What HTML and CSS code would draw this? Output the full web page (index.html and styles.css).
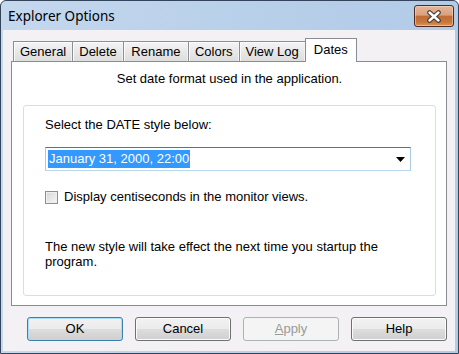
FILE: index.html
```html
<!DOCTYPE html>
<html>
<head>
<meta charset="utf-8">
<title>Explorer Options</title>
<link rel="stylesheet" href="styles.css">
</head>
<body>
<div class="window">
  <div class="titlebar">
    <span class="title">Explorer Options</span>
    <div class="close">
      <svg width="16" height="13" viewBox="0 0 16 13">
        <path d="M3.5 2.5 L12.5 10.5 M12.5 2.5 L3.5 10.5" stroke="#3b3b3b" stroke-width="4.6" stroke-linecap="round" fill="none"/>
        <path d="M3.5 2.5 L12.5 10.5 M12.5 2.5 L3.5 10.5" stroke="#ffffff" stroke-width="2.4" stroke-linecap="round" fill="none"/>
      </svg>
    </div>
  </div>
  <div class="client">
    <div class="tabs">
      <div class="tab">General</div>
      <div class="tab">Delete</div>
      <div class="tab wide">Rename</div>
      <div class="tab">Colors</div>
      <div class="tab">View Log</div>
      <div class="tab active">Dates</div>
    </div>
    <div class="panel">
      <p class="intro">Set date format used in the application.</p>
      <div class="group">
        <div class="label">Select the DATE style below:</div>
        <div class="combo">
          <span class="sel">January 31, 2000, 22:00</span>
          <svg class="arrow" width="9" height="5" viewBox="0 0 9 5"><polygon points="0,0 9,0 4.5,5" fill="#000"/></svg>
        </div>
        <div class="check"><span class="box"></span><span>Display centiseconds in the monitor views.</span></div>
        <p class="note">The new style will take effect the next time you startup the<br>program.</p>
      </div>
    </div>
    <div class="buttons">
      <div class="btn default">OK</div>
      <div class="btn">Cancel</div>
      <div class="btn disabled"><u>A</u>pply</div>
      <div class="btn">Help</div>
    </div>
  </div>
</div>
</body>
</html>
```
FILE: styles.css
```css
html, body {
  margin: 0;
  padding: 0;
  background: #ffffff;
}
body {
  width: 459px;
  height: 354px;
  overflow: hidden;
  font-family: "Liberation Sans", Arial, sans-serif;
  font-size: 13px;
  color: #000;
}
.window {
  box-sizing: border-box;
  width: 459px;
  height: 354px;
  border: 1px solid #34445a;
  border-radius: 6px 6px 0 0;
  background: linear-gradient(90deg, #c4d8ee 0%, #b7cfe9 60%, #b2cbe7 100%);
  display: flex;
  flex-direction: column;
}
.titlebar {
  height: 29px;
  flex: none;
  display: flex;
  justify-content: space-between;
  align-items: flex-start;
  padding: 0 4px 0 7px;
  box-sizing: border-box;
}
.title {
  font-family: "Noto Sans", "Open Sans", sans-serif;
  font-size: 13.5px;
  line-height: 30px;
  color: #000;
}
.close {
  width: 40px;
  height: 22px;
  margin-top: 4px;
  box-sizing: border-box;
  border: 1px solid #4d2a22;
  border-radius: 3px;
  background: linear-gradient(#e6b79a 0%, #daa07c 45%, #c06c38 52%, #c77638 80%, #dc9552 100%);
  box-shadow: inset 0 0 0 1px rgba(255, 235, 215, 0.45);
  display: flex;
  align-items: center;
  justify-content: center;
}
.client {
  flex: 1;
  margin: 0 3px 2px 2px;
  background: #f4f1f4;
  padding: 8px 8px 10px 8px;
  box-sizing: border-box;
  display: flex;
  flex-direction: column;
}
.tabs {
  display: flex;
  align-items: flex-end;
  height: 23px;
  padding-left: 2px;
  flex: none;
}
.tab {
  height: 20px;
  box-sizing: border-box;
  border: 1px solid #8c8e94;
  border-bottom: none;
  margin-right: -1px;
  padding: 0 6px;
  line-height: 19px;
  background: linear-gradient(#f4f4f4, #e8e8e8 50%, #dddddd);
  box-shadow: inset 1px 1px 0 #fbfbfb, inset -1px 0 0 #f2f2f2;
}
.tab.wide {
  padding: 0 7.5px;
}
.tab.active {
  height: 24px;
  line-height: 21px;
  padding: 0 8px;
  background: #ffffff;
  box-shadow: none;
  border-color: #898c95;
  margin-bottom: -1px;
  position: relative;
  z-index: 1;
}
.panel {
  height: 245px;
  flex: none;
  box-sizing: border-box;
  border: 1px solid #898c95;
  background: #ffffff;
  padding: 9px 10px 9px 11px;
  display: flex;
  flex-direction: column;
}
.intro {
  margin: 0 0 18px 0;
  line-height: 16px;
  text-align: center;
}
.group {
  flex: 1;
  border: 1px solid #d5dfe5;
  border-radius: 3px;
  padding: 11px 24px 0 21px;
}
.label {
  line-height: 16px;
}
.combo {
  margin-top: 14px;
  height: 24px;
  box-sizing: border-box;
  border: 1px solid;
  border-color: #3d7bad #a9cbe6 #b7d9ed #a9cbe6;
  background: #ffffff;
  display: flex;
  align-items: center;
  justify-content: space-between;
  padding: 0 5px 0 2px;
}
.sel {
  background: #3399ff;
  color: #ffffff;
  height: 18px;
  line-height: 18px;
  padding: 0 1px;
}
.check {
  margin-top: 19px;
  height: 14px;
  display: flex;
  align-items: center;
  gap: 6px;
  line-height: 14px;
}
.box {
  width: 13px;
  height: 13px;
  box-sizing: border-box;
  border: 1px solid #8f8f8f;
  background: linear-gradient(135deg, #d6d6d6, #f6f6f6);
  box-shadow: inset 0 0 0 1px #f0f0f0;
}
.note {
  margin: 35px 0 0 0;
  line-height: 15px;
}
.buttons {
  margin-top: 11px;
  display: flex;
  justify-content: space-between;
  padding: 0 0 0 16px;
  flex: none;
}
.btn {
  width: 96px;
  height: 24px;
  box-sizing: border-box;
  border: 1px solid #707070;
  border-radius: 3px;
  background: linear-gradient(#f2f2f2 0%, #ebebeb 50%, #dddddd 51%, #cfcfcf 100%);
  box-shadow: inset 0 0 0 1px #fbfbfb;
  line-height: 22px;
  text-align: center;
}
.btn.default {
  border-color: #3c7fb1;
  box-shadow: inset 0 0 0 1px #a9dcf7;
}
.btn.disabled {
  border-color: #adb2b5;
  background: #f4f4f4;
  box-shadow: none;
  color: #9a9a9a;
}
```
